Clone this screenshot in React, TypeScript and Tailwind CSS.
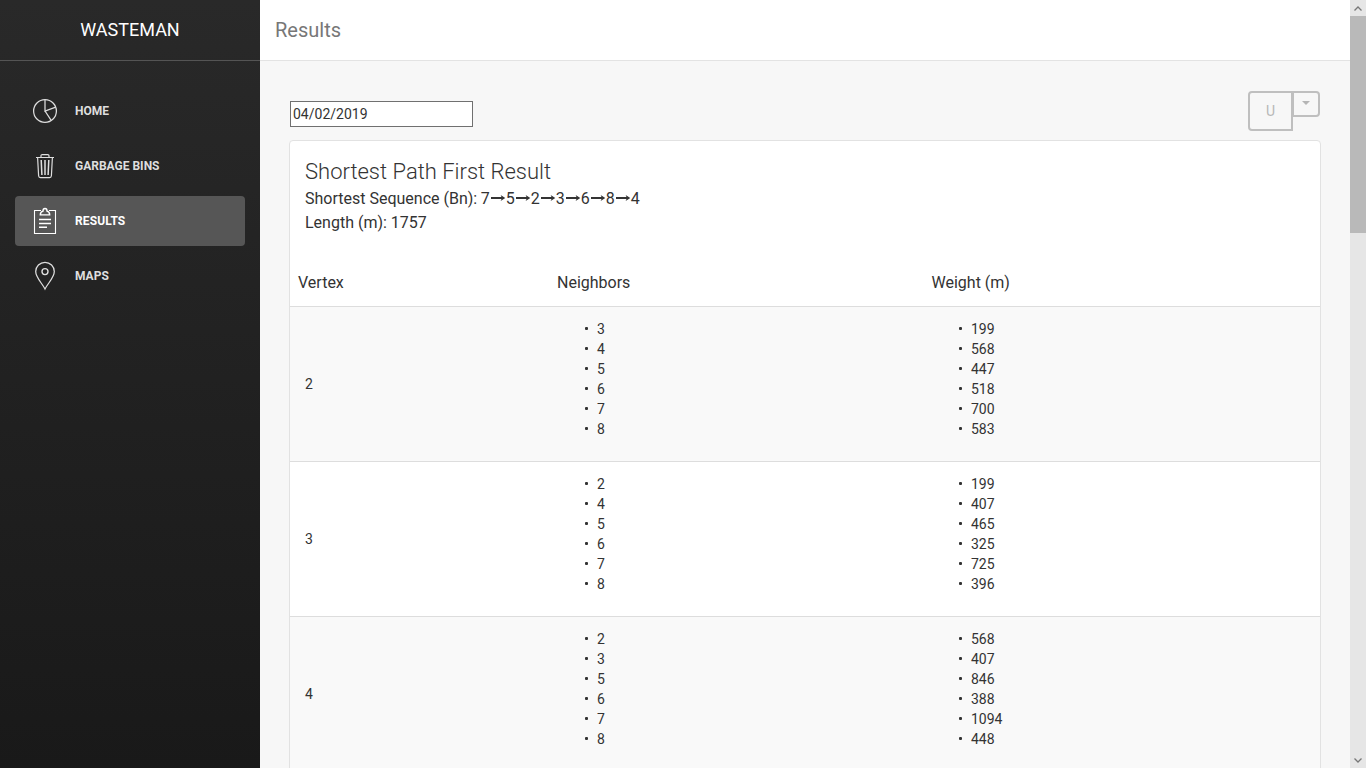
import { Fragment } from 'react';
import type { ReactNode } from 'react';

const PieIcon = () => (
  <svg width="30" height="30" viewBox="0 0 30 30" fill="none" stroke="currentColor" strokeWidth="1.25">
    <circle cx="15" cy="15" r="11.4" />
    <path d="M15 3.5V15l10.7-3.8M15 15l6.2 9.4" />
  </svg>
);

const TrashIcon = () => (
  <svg width="30" height="30" viewBox="0 0 30 30" fill="none" stroke="currentColor" strokeWidth="1.2">
    <path d="M6 6.5h18M11 6.2V4.8c0-.8.5-1.2 1.2-1.2h5.6c.7 0 1.2.4 1.2 1.2v1.4" />
    <path d="M7.6 6.5l1 18.2c.1 1.3.7 1.9 1.8 1.9h9.2c1.1 0 1.7-.6 1.8-1.9l1-18.2" />
    <path d="M11.2 9l.7 15M15 9v15M18.8 9l-.7 15" strokeWidth="1.5" />
  </svg>
);

const NoteIcon = () => (
  <svg width="30" height="30" viewBox="0 0 30 30" fill="none" stroke="currentColor" strokeWidth="1.1">
    <path d="M11 4.5H4.5v23h21v-23H19" />
    <path d="M10.3 8.9h9.4c0-2.2-1-3.4-2.7-3.8 0-1.6-.7-2.6-2-2.6s-2 1-2 2.6c-1.7.4-2.7 1.6-2.7 3.8z" strokeWidth="1.4" />
    <path d="M9 13.5h12M9 17.5h12M9 21.2h8" strokeWidth="1.4" />
  </svg>
);

const PinIcon = () => (
  <svg width="30" height="30" viewBox="0 0 30 30" fill="none" stroke="currentColor" strokeWidth="1.25">
    <path d="M15 28C12 22 5.7 16.6 5.7 10.6a9.3 9.3 0 0 1 18.6 0C24.3 16.6 18 22 15 28z" />
    <circle cx="15" cy="10.6" r="3" strokeWidth="1.4" />
  </svg>
);

function NavItem({ icon, label, active = false }: { icon: ReactNode; label: string; active?: boolean }) {
  return (
    <a
      className={
        active
          ? 'flex h-[50px] items-center rounded-[4px] bg-[#565656] pl-[15px] tracking-[0.1px] text-white'
          : 'flex h-[50px] items-center rounded-[4px] pl-[15px] text-[#dedede]'
      }
    >
      {icon}
      <span className="ml-[15px] text-[12px] leading-[30px] font-bold">{label}</span>
    </a>
  );
}

const rows = [
  { vertex: 2, neighbors: [3, 4, 5, 6, 7, 8], weights: [199, 568, 447, 518, 700, 583] },
  { vertex: 3, neighbors: [2, 4, 5, 6, 7, 8], weights: [199, 407, 465, 325, 725, 396] },
  { vertex: 4, neighbors: [2, 3, 5, 6, 7, 8], weights: [568, 407, 846, 388, 1094, 448] },
];

const sequence = [7, 5, 2, 3, 6, 8, 4];

function List({ values }: { values: number[] }) {
  return (
    <ul className="pt-3 pl-9">
      {values.map((v) => (
        <li key={v} className="flex h-5 items-center leading-5">
          <span className="mb-px size-[3px] rounded-[1px] bg-[#333]" />
          <span className="ml-[9px]">{v}</span>
        </li>
      ))}
    </ul>
  );
}

export default function App() {
  return (
    <div className="flex h-[768px] w-[1366px] overflow-hidden bg-[#f7f7f7] font-['Roboto',sans-serif] text-[14px] text-[#333]">
      <aside className="w-[260px] shrink-0 bg-linear-to-b from-[#292929] to-[#191919]">
        <div className="flex h-[61px] items-center justify-center border-b border-[#545454] pb-[2px] text-[18px] text-white">
          WASTEMAN
        </div>
        <nav className="flex flex-col gap-[5px] px-[15px] pt-[25px]">
          <NavItem icon={<PieIcon />} label="HOME" />
          <NavItem icon={<TrashIcon />} label="GARBAGE BINS" />
          <NavItem icon={<NoteIcon />} label="RESULTS" active />
          <NavItem icon={<PinIcon />} label="MAPS" />
        </nav>
      </aside>

      <main className="flex w-[1090px] shrink-0 flex-col">
        <header className="flex h-[61px] shrink-0 items-center border-b border-[#e3e3e3] bg-white pl-[15px] text-[20px] text-[#777]">
          Results
        </header>

        <div className="flex h-[79px] shrink-0 items-start justify-between pr-[30px] pl-[30px] pt-[30px]">
          <input
            readOnly
            value="04/02/2019"
            className="mt-[10px] h-[26px] w-[183px] border border-[#707070] bg-white px-[2px] text-[14px] outline-none"
          />
          <div className="flex items-start">
            <button className="flex h-10 w-[45px] items-center justify-center rounded-l-[4px] border-2 border-[#bfbfbf] text-[14px] text-[#b8b8b8]">
              U
            </button>
            <button className="-ml-px flex h-[26px] w-7 items-center justify-center rounded-r-[4px] border-2 border-[#bfbfbf]">
              <span className="-mt-[2px] border-x-4 border-t-4 border-x-transparent border-t-[#b5b5b5]" />
            </button>
          </div>
        </div>

        <section className="ml-[29px] h-[760px] w-[1032px] shrink-0 rounded-[4px] border border-[#e2e2e2] bg-white">
          <div className="h-[117px] px-[15px] pt-4">
            <h4 className="text-[22px] leading-[30px] font-light">Shortest Path First Result</h4>
            <p className="flex h-6 items-center text-[16px] leading-6">
              <span className="-mr-[0.5px] whitespace-pre">Shortest Sequence (Bn): </span>
              {sequence.map((n, i) => (
                <Fragment key={n}>
                  {i > 0 && (
                    <svg className="mb-[2px]" width="16" height="10" viewBox="0 0 16 10" fill="#333">
                      <path d="M1 4h10.5L10.6 2 15.3 5 10.6 8 11.5 6H1z" />
                    </svg>
                  )}
                  <span>{n}</span>
                </Fragment>
              ))}
            </p>
            <p className="text-[16px] leading-6">Length (m): 1757</p>
          </div>
          <div className="grid h-[49px] grid-cols-[259px_374px_397px] border-b border-[#ddd] text-[16px] leading-[49px]">
            <div className="pl-2">Vertex</div>
            <div className="pl-2">Neighbors</div>
            <div className="pl-[8.5px]">Weight (m)</div>
          </div>
          <div>
            {rows.map((r) => (
              <div
                key={r.vertex}
                className="grid h-[155px] grid-cols-[259px_374px_397px] border-b border-[#ddd] odd:bg-[#f9f9f9] even:bg-white"
              >
                <div className="flex items-center pl-[15px]">{r.vertex}</div>
                <List values={r.neighbors} />
                <List values={r.weights} />
              </div>
            ))}
          </div>
        </section>
      </main>

      <div className="flex w-4 shrink-0 flex-col bg-[#e6e6e6]">
        <div className="flex h-4 items-center justify-center">
          <svg width="8" height="5" viewBox="0 0 8 5" fill="none" stroke="#777" strokeWidth="1.3">
            <path d="M.5 4.5L4 1l3.5 3.5" />
          </svg>
        </div>
        <div className="h-[217px] bg-[#b9b9b9]" />
        <div className="mt-auto flex h-4 items-center justify-center">
          <svg width="8" height="5" viewBox="0 0 8 5" fill="none" stroke="#777" strokeWidth="1.3">
            <path d="M.5.5L4 4 7.5.5" />
          </svg>
        </div>
      </div>
    </div>
  );
}
